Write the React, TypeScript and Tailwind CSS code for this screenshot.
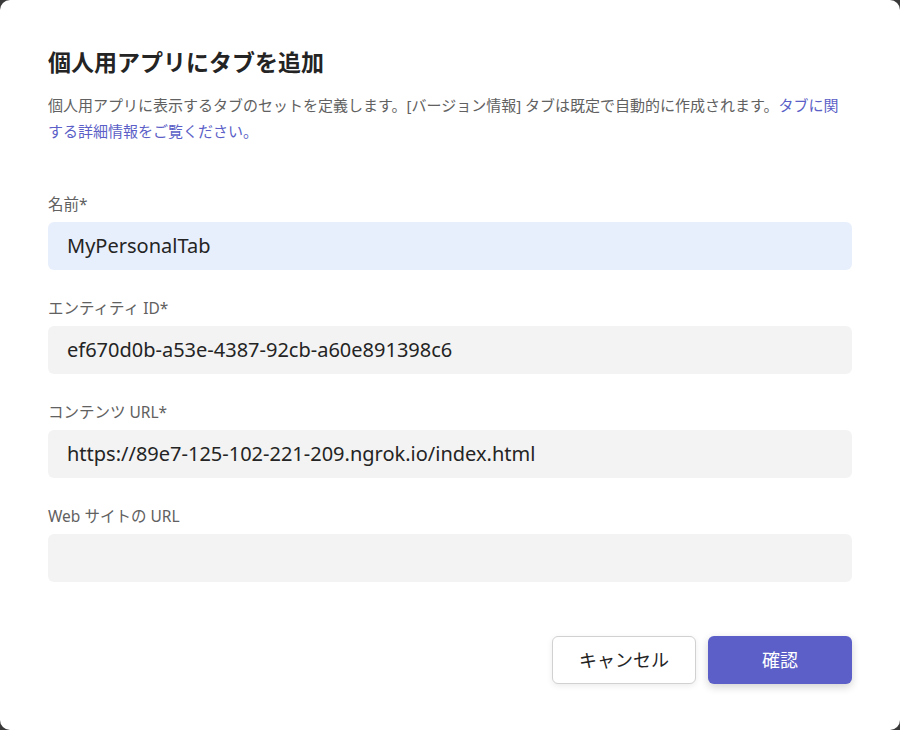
import React from 'react';

const FONT = "font-['Noto_Sans','Noto_Sans_CJK_JP',sans-serif]";

interface FieldProps {
  label: string;
  value: string;
  focused?: boolean;
}

/** ラベル付き入力欄 */
function Field({ label, value, focused }: FieldProps) {
  return (
    <div className="flex flex-col">
      <label className="text-[15.5px] leading-[20px] text-[#616161]">{label}</label>
      <div
        className={`mt-2 h-[48px] rounded-[6px] px-[19px] flex items-center text-[20px] text-[#242424] ${
          focused ? 'bg-[#e8effc]' : 'bg-[#f3f3f3]'
        }`}
      >
        {value}
      </div>
    </div>
  );
}

export default function App() {
  return (
    <div className={`w-[900px] h-[730px] bg-[#3a3a3a] ${FONT}`}>
      <div className="w-full h-full bg-white rounded-[10px] px-12 pt-[46px] flex flex-col">
        <h1 className="text-[23px] leading-[32px] font-bold text-[#242424]">個人用アプリにタブを追加</h1>
        <p className="mt-[14px] text-[15px] leading-[26px] text-[#616161]">
          個人用アプリに表示するタブのセットを定義します。[バージョン情報] タブは既定で自動的に作成されます。
          <span className="text-[#5b5fc7]">タブに関する詳細情報をご覧ください。</span>
        </p>

        <div className="mt-[50px] flex flex-col gap-[28px]">
          <Field label="名前*" value="MyPersonalTab" focused />
          <Field label="エンティティ ID*" value="ef670d0b-a53e-4387-92cb-a60e891398c6" />
          <Field label="コンテンツ URL*" value="https://89e7-125-102-221-209.ngrok.io/index.html" />
          <Field label="Web サイトの URL" value="" />
        </div>

        <div className="mt-[54px] flex justify-end gap-3">
          <button className="w-[144px] h-[48px] rounded-[6px] border border-[#d1d1d1] bg-white text-[18px] text-[#242424] shadow-[0_2px_6px_rgba(0,0,0,0.08)]">
            キャンセル
          </button>
          <button className="w-[144px] h-[48px] rounded-[6px] bg-[#5b5fc7] text-[18px] text-white shadow-[0_3px_8px_rgba(0,0,0,0.18)]">
            確認
          </button>
        </div>
      </div>
    </div>
  );
}
